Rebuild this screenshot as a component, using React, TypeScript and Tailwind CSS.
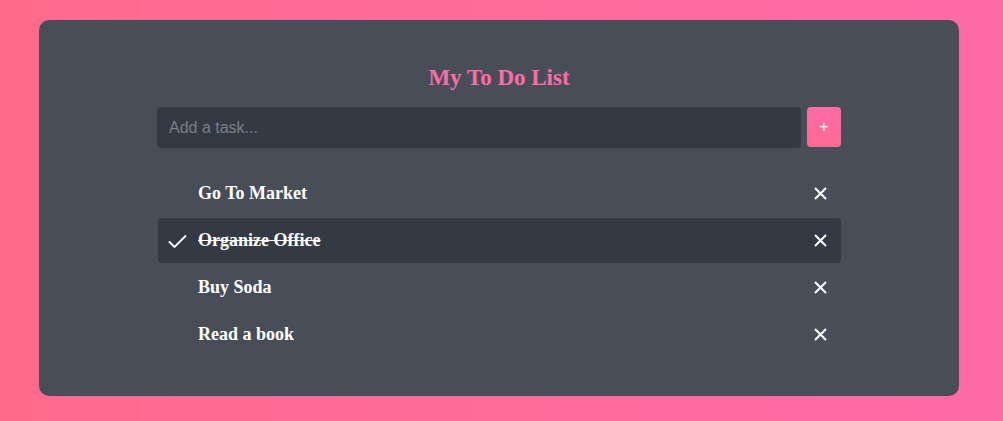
import { useState } from "react";

const initialTasks = [
  { id: 1, text: "Go To Market", done: false },
  { id: 2, text: "Organize Office", done: true },
  { id: 3, text: "Buy Soda", done: false },
  { id: 4, text: "Read a book", done: false },
];

export default function App() {
  const [tasks, setTasks] = useState(initialTasks);
  const [value, setValue] = useState("");

  const add = () => {
    if (!value.trim()) return;
    setTasks([...tasks, { id: Date.now(), text: value.trim(), done: false }]);
    setValue("");
  };

  return (
    <div className="min-h-[421px] w-full bg-gradient-to-r from-[#ff6a8c] to-[#ff6ba8] pt-[20px] pb-[25px]">
      <div className="ml-[39px] w-[920px] h-[376px] rounded-[10px] bg-[#484e58] pt-[44px]">
        <h1 className="text-center text-[23px] leading-[28px] font-bold text-[#ff6ba8] font-['Liberation_Serif',serif]">
          My To Do List
        </h1>
        <div className="mx-auto w-[684px] mt-[15px] flex gap-[6px]">
          <input
            value={value}
            onChange={(e) => setValue(e.target.value)}
            placeholder="Add a task..."
            className="flex-1 h-[41px] rounded-[4px] bg-[#343a43] px-[12px] text-[16px] text-white placeholder-[#7a7f86] outline-none font-['Liberation_Sans',sans-serif]"
          />
          <button
            onClick={add}
            className="w-[34px] h-[40px] rounded-[4px] bg-gradient-to-b from-[#ff6aa8] to-[#ff6a90] text-white text-[16px] font-['Liberation_Sans',sans-serif]"
          >
            +
          </button>
        </div>
        <ul className="mx-auto w-[684px] mt-[23px] flex flex-col gap-[2px] pl-[1px]">
          {tasks.map((t) => (
            <li
              key={t.id}
              onClick={() => setTasks(tasks.map((x) => (x.id === t.id ? { ...x, done: !x.done } : x)))}
              className={`flex items-center h-[45px] rounded-[4px] cursor-pointer ${t.done ? "bg-[#343a43]" : ""}`}
            >
              <span className="w-[40px] flex justify-center pr-[2px]">
                {t.done && (
                  <svg width="19" height="14" viewBox="0 0 19 14" fill="none">
                    <path d="M1 7.5 L6.5 13 L18 1.5" stroke="white" strokeWidth="1.8" />
                  </svg>
                )}
              </span>
              <span
                className={`flex-1 text-[18px] font-bold text-white font-['Liberation_Serif',serif] ${t.done ? "line-through" : ""}`}
              >
                {t.text}
              </span>
              <button
                onClick={(e) => {
                  e.stopPropagation();
                  setTasks(tasks.filter((x) => x.id !== t.id));
                }}
                className="w-[40px] h-[45px] flex items-center justify-center mr-[1px]"
              >
                <svg width="13" height="13" viewBox="0 0 13 13">
                  <path d="M1 1 L12 12 M12 1 L1 12" stroke="white" strokeWidth="2" />
                </svg>
              </button>
            </li>
          ))}
        </ul>
      </div>
    </div>
  );
}
